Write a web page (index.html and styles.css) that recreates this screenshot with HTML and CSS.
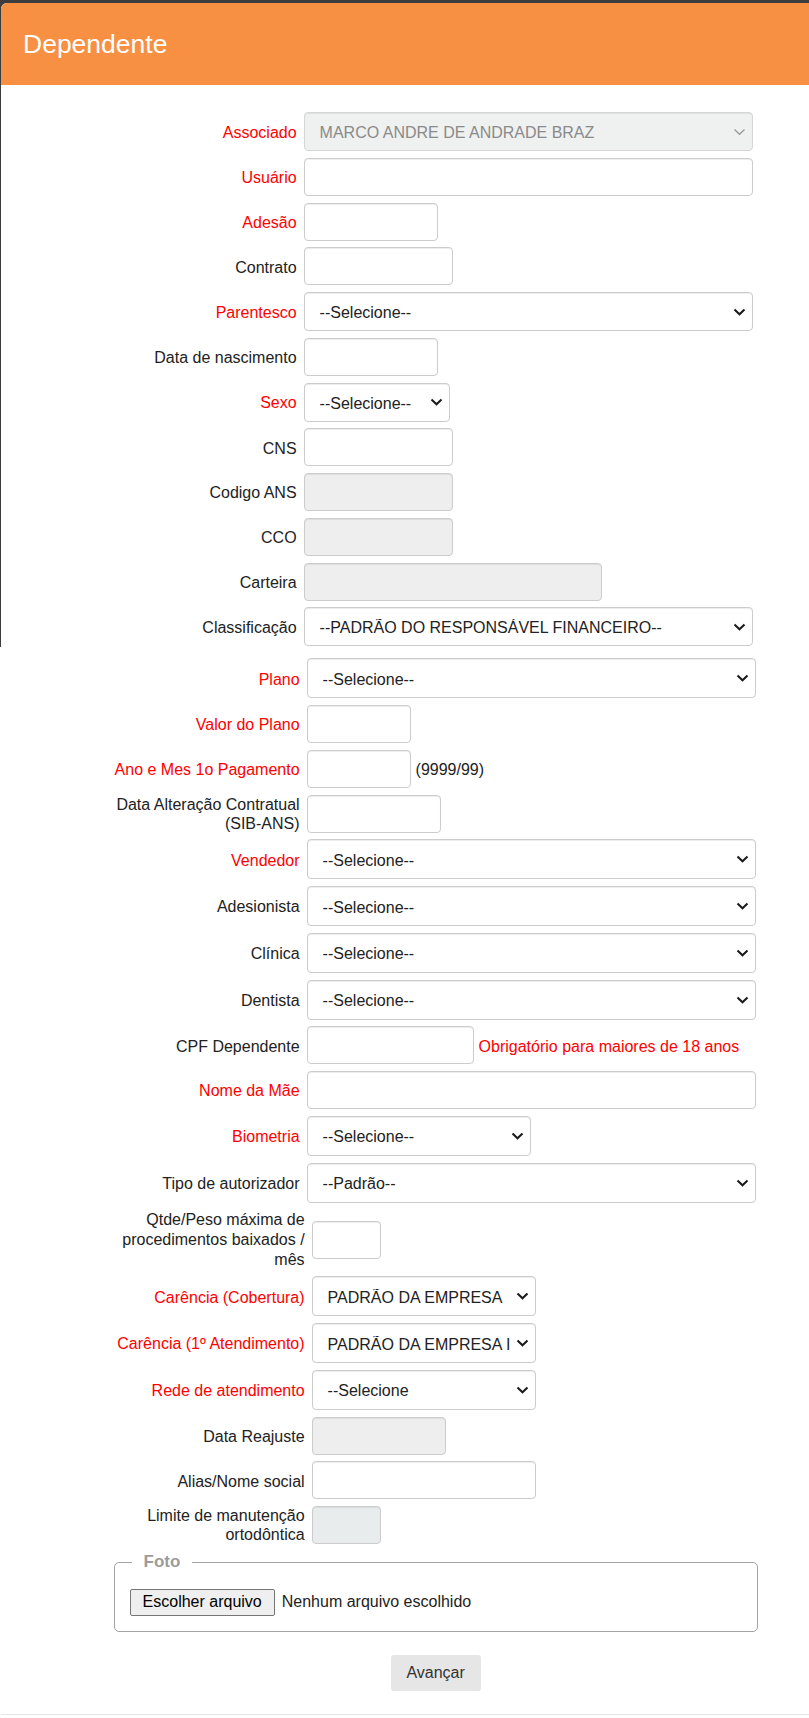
FILE: index.html
```html
<!DOCTYPE html>
<html lang="pt-BR">
<head>
<meta charset="utf-8">
<title>Dependente</title>
<link rel="stylesheet" href="styles.css">
</head>
<body>
<div class="backdrop">
  <div class="modal">
    <div class="modal-header"><h4 class="title">Dependente</h4></div>
    <div class="modal-body">
      <form class="form">
        <div class="grid grid-a">
          <label class="lbl req">Associado</label>
          <span class="sel dis h39 w449"><select><option>MARCO ANDRE DE ANDRADE BRAZ</option></select><svg class="chev" viewBox="0 0 13 8"><path d="M1.5 1.5 L6.5 6.3 L11.5 1.5"/></svg></span>

          <label class="lbl req">Usuário</label>
          <input class="inp w449" type="text">

          <label class="lbl req">Adesão</label>
          <input class="inp w134" type="text">

          <label class="lbl">Contrato</label>
          <input class="inp w149" type="text">

          <label class="lbl req">Parentesco</label>
          <span class="sel h39 w449"><select><option>--Selecione--</option></select><svg class="chev" viewBox="0 0 13 8"><path d="M1.5 1.5 L6.5 6.3 L11.5 1.5"/></svg></span>

          <label class="lbl">Data de nascimento</label>
          <input class="inp w134" type="text">

          <label class="lbl req">Sexo</label>
          <span class="sel h39 w146"><select><option>--Selecione--</option></select><svg class="chev" viewBox="0 0 13 8"><path d="M1.5 1.5 L6.5 6.3 L11.5 1.5"/></svg></span>

          <label class="lbl">CNS</label>
          <input class="inp w149" type="text">

          <label class="lbl">Codigo ANS</label>
          <input class="inp dis w149" type="text">

          <label class="lbl">CCO</label>
          <input class="inp dis w149" type="text">

          <label class="lbl">Carteira</label>
          <input class="inp dis w298" type="text">

          <label class="lbl">Classificação</label>
          <span class="sel h39 w449"><select><option>--PADRÃO DO RESPONSÁVEL FINANCEIRO--</option></select><svg class="chev" viewBox="0 0 13 8"><path d="M1.5 1.5 L6.5 6.3 L11.5 1.5"/></svg></span>
        </div>

        <div class="grid grid-b">
          <label class="lbl req">Plano</label>
          <span class="sel h40 w449"><select><option>--Selecione--</option></select><svg class="chev" viewBox="0 0 13 8"><path d="M1.5 1.5 L6.5 6.3 L11.5 1.5"/></svg></span>

          <label class="lbl req">Valor do Plano</label>
          <input class="inp w104" type="text">

          <label class="lbl req">Ano e Mes 1o Pagamento</label>
          <div class="pair"><input class="inp w104" type="text"><span class="hint">(9999/99)</span></div>

          <label class="lbl ml">Data Alteração Contratual<br>(SIB-ANS)</label>
          <input class="inp w134" type="text">

          <label class="lbl req">Vendedor</label>
          <span class="sel h40 w449"><select><option>--Selecione--</option></select><svg class="chev" viewBox="0 0 13 8"><path d="M1.5 1.5 L6.5 6.3 L11.5 1.5"/></svg></span>

          <label class="lbl">Adesionista</label>
          <span class="sel h40 w449"><select><option>--Selecione--</option></select><svg class="chev" viewBox="0 0 13 8"><path d="M1.5 1.5 L6.5 6.3 L11.5 1.5"/></svg></span>

          <label class="lbl">Clínica</label>
          <span class="sel h40 w449"><select><option>--Selecione--</option></select><svg class="chev" viewBox="0 0 13 8"><path d="M1.5 1.5 L6.5 6.3 L11.5 1.5"/></svg></span>

          <label class="lbl">Dentista</label>
          <span class="sel h40 w449"><select><option>--Selecione--</option></select><svg class="chev" viewBox="0 0 13 8"><path d="M1.5 1.5 L6.5 6.3 L11.5 1.5"/></svg></span>

          <label class="lbl">CPF Dependente</label>
          <div class="pair"><input class="inp w167" type="text"><span class="hint req">Obrigatório para maiores de 18 anos</span></div>

          <label class="lbl req">Nome da Mãe</label>
          <input class="inp w449" type="text">

          <label class="lbl req">Biometria</label>
          <span class="sel h40 w224"><select><option>--Selecione--</option></select><svg class="chev" viewBox="0 0 13 8"><path d="M1.5 1.5 L6.5 6.3 L11.5 1.5"/></svg></span>

          <label class="lbl">Tipo de autorizador</label>
          <span class="sel h40 w449"><select><option>--Padrão--</option></select><svg class="chev" viewBox="0 0 13 8"><path d="M1.5 1.5 L6.5 6.3 L11.5 1.5"/></svg></span>
        </div>

        <div class="grid grid-c">
          <label class="lbl ml3">Qtde/Peso máxima de<br>procedimentos baixados /<br>mês</label>
          <input class="inp w69" type="text">

          <label class="lbl req">Carência (Cobertura)</label>
          <span class="sel h40 w224"><select><option>PADRÃO DA EMPRESA</option></select><svg class="chev" viewBox="0 0 13 8"><path d="M1.5 1.5 L6.5 6.3 L11.5 1.5"/></svg></span>

          <label class="lbl req">Carência (1º Atendimento)</label>
          <span class="sel h40 w224"><select><option>PADRÃO DA EMPRESA I</option></select><svg class="chev" viewBox="0 0 13 8"><path d="M1.5 1.5 L6.5 6.3 L11.5 1.5"/></svg></span>

          <label class="lbl req">Rede de atendimento</label>
          <span class="sel h40 w224"><select><option>--Selecione</option></select><svg class="chev" viewBox="0 0 13 8"><path d="M1.5 1.5 L6.5 6.3 L11.5 1.5"/></svg></span>

          <label class="lbl">Data Reajuste</label>
          <input class="inp dis w134" type="text">

          <label class="lbl">Alias/Nome social</label>
          <input class="inp w224" type="text">

          <label class="lbl ml">Limite de manutenção<br>ortodôntica</label>
          <input class="inp dis2 w69" type="text">
        </div>

        <fieldset class="foto">
          <legend class="foto-legend">Foto</legend>
          <div class="file-row">
            <button type="button" class="file-btn">Escolher arquivo</button>
            <span class="file-name">Nenhum arquivo escolhido</span>
          </div>
        </fieldset>

        <div class="actions">
          <button type="button" class="btn-next">Avançar</button>
        </div>
      </form>
    </div>
    <div class="modal-footer"></div>
  </div>
</div>
</body>
</html>
```
FILE: styles.css
```css
* {
  box-sizing: border-box;
}

html, body {
  margin: 0;
  padding: 0;
  background: #fff;
}

body {
  font-family: "Liberation Sans", Arial, sans-serif;
  font-size: 16px;
  color: #222;
}

.backdrop {
  background: linear-gradient(to bottom, #3d3d3d 0, #3d3d3d 647px, #fff 647px);
  padding: 3px 0 0 1px;
  min-height: 1718px;
}

.modal {
  background: #fff;
  border-top-left-radius: 6px;
  overflow: hidden;
  min-height: 1715px;
}

.modal-header {
  height: 82px;
  background: #f79042;
  display: flex;
  align-items: center;
  padding-left: 22px;
}

.title {
  margin: 0;
  color: #fff;
  font-size: 26.5px;
  font-weight: 400;
  line-height: 30px;
}

.modal-body {
  padding-top: 27px;
}

.form {
  margin-left: 112.6px;
  width: 644px;
}

.grid {
  display: grid;
  column-gap: 7px;
  row-gap: 6.75px;
  align-items: center;
}

.grid > * {
  justify-self: start;
}

.grid > .lbl {
  justify-self: stretch;
}

.grid-a {
  grid-template-columns: 183px 449px;
}

.grid-b {
  grid-template-columns: 186px 449px;
  margin-top: 12px;
}

.grid-c {
  grid-template-columns: 191px 224px;
  margin-top: 7px;
}

.lbl {
  text-align: right;
  font-size: 16px;
  line-height: 20px;
  padding-top: 2.6px;
  color: #222;
  white-space: nowrap;
}

.lbl.ml {
  line-height: 19px;
  padding-top: 0;
}

.lbl.ml3 {
  line-height: 20px;
  padding-top: 0;
}

.req {
  color: #f00;
}

.lbl.req {
  color: #f00;
}

.inp {
  display: block;
  height: 38px;
  margin: 0;
  border: 1px solid #ccc;
  border-radius: 4px;
  box-shadow: inset 0 1px 1px rgba(0, 0, 0, 0.075);
  background: #fff;
  font-family: "Liberation Sans", Arial, sans-serif;
  font-size: 16px;
  color: #222;
  padding: 0 12px;
}

.inp.dis {
  background: #eee;
}

.inp.dis2 {
  background: #e9ecec;
}

.sel {
  position: relative;
  display: block;
}

.sel select {
  -webkit-appearance: none;
  appearance: none;
  display: block;
  width: 100%;
  height: 100%;
  margin: 0;
  border: 1px solid #ccc;
  border-radius: 4px;
  box-shadow: inset 0 1px 1px rgba(0, 0, 0, 0.075);
  background: #fff;
  font-family: "Liberation Sans", Arial, sans-serif;
  font-size: 16px;
  color: #222;
  padding: 2px 30px 0 15px;
}

.sel.w224 select {
  padding-right: 21px;
}

.sel.dis select {
  background: #eff0f0;
  border-color: #d6d6d6;
  color: #8a8a8a;
}

.chev {
  position: absolute;
  right: 7px;
  top: 50%;
  margin-top: -4px;
  width: 13px;
  height: 8px;
  pointer-events: none;
  fill: none;
  stroke: #1a1a1a;
  stroke-width: 2;
}

.sel.dis .chev {
  stroke: #9a9a9a;
  stroke-width: 1.3;
}

.h39 { height: 39px; }
.h40 { height: 40px; }

.w449 { width: 449px; }
.w298 { width: 298px; }
.w224 { width: 224px; }
.w167 { width: 167px; }
.w149 { width: 149px; }
.w146 { width: 146px; }
.w134 { width: 134px; }
.w104 { width: 104px; }
.w69 { width: 69px; }

.pair {
  display: flex;
  align-items: center;
  gap: 5px;
}

.hint {
  font-size: 16px;
  line-height: 20px;
  padding-top: 2.6px;
  color: #222;
  white-space: nowrap;
}

.hint.req {
  color: #f00;
}

.foto {
  margin: 8px 0 0;
  padding: 16.5px 15px 15.3px;
  border: 1px solid #a3a3a3;
  border-radius: 5px;
  min-width: 0;
}

.foto-legend {
  margin-left: 2px;
  padding: 0 12px;
  font-size: 17px;
  font-weight: 700;
  line-height: 20px;
  color: #9c9c9c;
}

.file-row {
  display: flex;
  align-items: center;
  gap: 7px;
}

.file-btn {
  height: 27px;
  margin: 0;
  padding: 0 12px;
  background: #efefef;
  border: 1px solid #767676;
  border-radius: 2px;
  font-family: "Liberation Sans", Arial, sans-serif;
  font-size: 16px;
  color: #000;
}

.file-name {
  font-size: 16px;
  color: #222;
}

.actions {
  display: flex;
  justify-content: center;
  margin-top: 23px;
  padding-bottom: 23px;
}

.btn-next {
  width: 90px;
  height: 36px;
  border: none;
  border-radius: 3px;
  background: #e6e6e6;
  font-family: "Liberation Sans", Arial, sans-serif;
  font-size: 16px;
  color: #333;
}

.modal-footer {
  border-top: 1px solid #e5e5e5;
  height: 10px;
}
```
